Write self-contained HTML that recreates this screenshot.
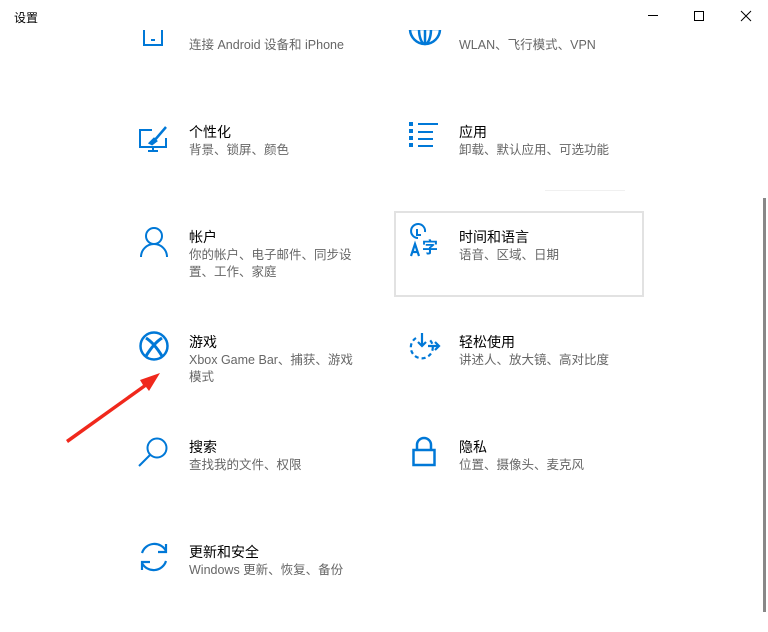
<!DOCTYPE html>
<html><head><meta charset="utf-8"><style>
*{margin:0;padding:0}
body{width:768px;height:632px;background:#fff;position:relative;overflow:hidden;font-family:"Liberation Sans","Noto Sans CJK SC",sans-serif}
.t{position:absolute;font-size:14px;color:#000;line-height:16px;white-space:nowrap}
.s{position:absolute;font-size:12.5px;color:#666;line-height:17px;width:165px}
svg{position:absolute;overflow:visible}
</style></head><body>
<div style="position:absolute;left:14px;top:9px;font-size:12px;color:#000">设置</div>
<svg style="left:648px;top:9px" width="110" height="16" fill="none" stroke="#000" stroke-width="1">
<line x1="0" y1="6.5" x2="10" y2="6.5"/>
<rect x="46.5" y="2.5" width="9" height="9"/>
<path d="M93 2 L103 12 M103 2 L93 12"/>
</svg>
<div style="position:absolute;left:763px;top:198px;width:3px;height:414px;background:#888"></div>

<div style="position:absolute;left:0;top:30px;width:768px;height:40px;overflow:hidden">
<svg style="left:143px;top:-20px" width="22" height="36" fill="none" stroke="#0078d7" stroke-width="2"><rect x="1" y="0" width="18" height="35"/><line x1="8" y1="30" x2="12" y2="30"/></svg>
<svg style="left:408px;top:-18px" width="34" height="34" fill="none" stroke="#0078d7" stroke-width="2.5"><circle cx="17" cy="17" r="15"/><ellipse cx="17" cy="17" rx="6" ry="15"/><line x1="2" y1="17" x2="32" y2="17"/><line x1="17" y1="2" x2="17" y2="32"/></svg>
</div>
<div class="s" style="left:189px;top:37px;width:220px">连接 Android 设备和 iPhone</div>
<div class="s" style="left:459px;top:37px;width:220px">WLAN、飞行模式、VPN</div>

<svg style="left:138px;top:125px" width="32" height="28" fill="none" stroke="#0078d7" stroke-width="2"><path d="M14 5 H2 V22 H28 V13"/><line x1="15" y1="22" x2="15" y2="26"/><line x1="10" y1="26" x2="20" y2="26"/><path d="M28 2 L16 16 M12 18 L16 14 L18 16 L14 19 Z" stroke-width="2.5"/></svg>
<div class="t" style="left:189px;top:124px">个性化</div>
<div class="s" style="left:189px;top:142px">背景、锁屏、颜色</div>

<svg style="left:409px;top:122px" width="32" height="30" fill="#0078d7"><rect x="0" y="0" width="4" height="4"/><rect x="0" y="7" width="4" height="4"/><rect x="0" y="14" width="4" height="4"/><rect x="0" y="21" width="4" height="4"/><rect x="9" y="1" width="20" height="2"/><rect x="9" y="9" width="15" height="2"/><rect x="9" y="16" width="15" height="2"/><rect x="9" y="23" width="15" height="2"/></svg>
<div class="t" style="left:459px;top:124px">应用</div>
<div class="s" style="left:459px;top:142px;width:220px">卸载、默认应用、可选功能</div>

<div style="position:absolute;left:545px;top:190px;width:80px;height:1px;background:#f0f0f0"></div>
<div style="position:absolute;left:394px;top:211px;width:246px;height:82px;border:2px solid #e2e2e2"></div>

<svg style="left:140px;top:226px" width="28" height="32" fill="none" stroke="#0078d7" stroke-width="2"><circle cx="14" cy="10" r="8"/><path d="M1 31 A13 13 0 0 1 27 31"/></svg>
<div class="t" style="left:189px;top:229px">帐户</div>
<div class="s" style="left:189px;top:247px">你的帐户、电子邮件、同步设置、工作、家庭</div>

<svg style="left:409px;top:226px" width="32" height="32" fill="none" stroke="#0078d7" stroke-width="2"><path d="M9 12 A7 7 0 1 1 16 6"/><path d="M8 3 V9 H12"/><path d="M2 30 L6 18 L10 30 M3.5 26 H8.5" stroke-width="2.2"/><text x="13" y="27" font-size="16" fill="#0078d7" stroke="none" font-family="Noto Sans CJK SC" font-weight="bold">字</text></svg>
<div class="t" style="left:459px;top:229px">时间和语言</div>
<div class="s" style="left:459px;top:247px">语音、区域、日期</div>

<svg style="left:139px;top:331px" width="30" height="30" fill="none" stroke="#0078d7" stroke-width="2.5"><circle cx="15" cy="15" r="13.5"/><path d="M7 7 Q15 12 23 25 M23 7 Q15 12 7 25" stroke-width="3"/></svg>
<div class="t" style="left:189px;top:334px">游戏</div>
<div class="s" style="left:189px;top:352px;width:168px">Xbox Game Bar、捕获、游戏模式</div>

<svg style="left:408px;top:332px" width="32" height="30" fill="none" stroke="#0078d7" stroke-width="2.2"><path d="M8 6 A11 11 0 1 0 22 8" stroke-dasharray="4 3"/><path d="M14 1 V14 M10 10 L14 14 L18 10"/><path d="M20 14 H31 M27 10 L31 14 L27 18"/></svg>
<div class="t" style="left:459px;top:334px">轻松使用</div>
<div class="s" style="left:459px;top:352px;width:220px">讲述人、放大镜、高对比度</div>

<svg style="left:138px;top:436px" width="32" height="32" fill="none" stroke="#0078d7" stroke-width="2"><circle cx="19" cy="12" r="9.5"/><line x1="12" y1="19" x2="1" y2="30"/></svg>
<div class="t" style="left:189px;top:439px">搜索</div>
<div class="s" style="left:189px;top:457px">查找我的文件、权限</div>

<svg style="left:412px;top:436px" width="24" height="32" fill="none" stroke="#0078d7" stroke-width="2.5"><path d="M5 14 V9 A7 7 0 0 1 19 9 V14"/><rect x="1.5" y="14" width="21" height="15"/></svg>
<div class="t" style="left:459px;top:439px">隐私</div>
<div class="s" style="left:459px;top:457px">位置、摄像头、麦克风</div>

<svg style="left:138px;top:541px" width="32" height="32" fill="none" stroke="#0078d7" stroke-width="2.2"><path d="M4 12 A13 13 0 0 1 28 10"/><path d="M28 3 V11 H20" /><path d="M28 20 A13 13 0 0 1 4 22"/><path d="M4 29 V21 H12"/></svg>
<div class="t" style="left:189px;top:544px">更新和安全</div>
<div class="s" style="left:189px;top:562px;width:220px">Windows 更新、恢复、备份</div>

<svg style="left:0;top:0" width="768" height="632"><path d="M66 440 L143 385 L140 380 L160 373 L149 391 L146 387 L68 443 Z" fill="#f0281c"/></svg>
</body></html>
